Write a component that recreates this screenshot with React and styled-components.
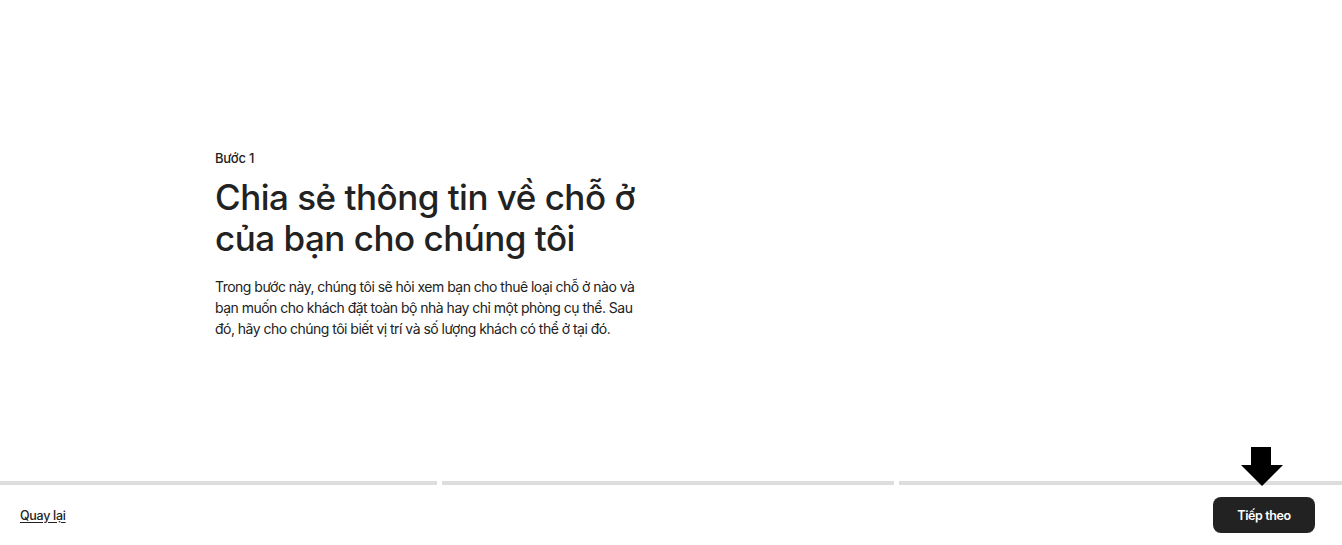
import React from 'react';
import styled, { createGlobalStyle } from 'styled-components';

const GlobalStyle = createGlobalStyle`
  html, body {
    margin: 0;
    padding: 0;
    background: #ffffff;
  }
  body {
    font-family: Inter, "Noto Sans", "Liberation Sans", sans-serif;
    color: #222222;
  }
  * {
    box-sizing: border-box;
  }
`;

export default function App() {
  return (
    <Page>
      <GlobalStyle />
      <Main>
        <Intro>
          <Step>Bước 1</Step>
          <Title>
            Chia sẻ thông tin về chỗ ở
            <br />
            của bạn cho chúng tôi
          </Title>
          <Description>
            Trong bước này, chúng tôi sẽ hỏi xem bạn cho thuê loại chỗ ở nào và
            bạn muốn cho khách đặt toàn bộ nhà hay chỉ một phòng cụ thể. Sau
            đó, hãy cho chúng tôi biết vị trí và số lượng khách có thể ở tại đó.
          </Description>
        </Intro>
      </Main>
      <Footer>
        <Progress>
          <Segment />
          <Segment />
          <Segment />
        </Progress>
        <Actions>
          <BackLink href="#">Quay lại</BackLink>
          <NextButton type="button">Tiếp theo</NextButton>
        </Actions>
        <Pointer viewBox="0 0 42 39" aria-hidden="true">
          <path d="M10 0 H30 V18 H42 L21 39 L0 18 H10 Z" fill="#000000" />
        </Pointer>
      </Footer>
    </Page>
  );
}

const Page = styled.div`
  display: flex;
  flex-direction: column;
  height: 545px;
  overflow: hidden;
`;

const Main = styled.main`
  flex: 1;
  display: flex;
  align-items: center;
  padding: 6px 0 0 215px;
`;

const Intro = styled.section`
  width: 425px;
  display: flex;
  flex-direction: column;
`;

const Step = styled.div`
  font-size: 13px;
  font-weight: 500;
  line-height: 18px;
  letter-spacing: -0.2px;
  margin-bottom: 10px;
`;

const Title = styled.h1`
  margin: 0;
  font-size: 35px;
  font-weight: 500;
  line-height: 41px;
  letter-spacing: -0.5px;
  white-space: nowrap;
`;

const Description = styled.p`
  margin: 17px 0 0;
  font-size: 14px;
  font-weight: 400;
  line-height: 21px;
  letter-spacing: -0.52px;
  color: #222222;
`;

const Footer = styled.footer`
  position: relative;
  display: flex;
  flex-direction: column;
`;

const Progress = styled.div`
  display: grid;
  grid-template-columns: 437px 452px 1fr;
  gap: 5px;
  height: 4px;
`;

const Segment = styled.div`
  background: #dddddd;
`;

const Actions = styled.div`
  display: flex;
  align-items: center;
  justify-content: space-between;
  height: 60px;
  padding: 0 27px 0 20px;
`;

const BackLink = styled.a`
  font-size: 12.5px;
  font-weight: 500;
  letter-spacing: -0.3px;
  color: #222222;
  text-decoration: underline;
  text-underline-offset: 2px;
`;

const NextButton = styled.button`
  width: 102px;
  height: 36px;
  border: none;
  border-radius: 8px;
  background: #222222;
  color: #ffffff;
  font-family: inherit;
  font-size: 12.5px;
  font-weight: 600;
  letter-spacing: -0.4px;
  cursor: pointer;
`;

const Pointer = styled.svg`
  position: absolute;
  left: 1241px;
  top: -34px;
  width: 42px;
  height: 39px;
`;
